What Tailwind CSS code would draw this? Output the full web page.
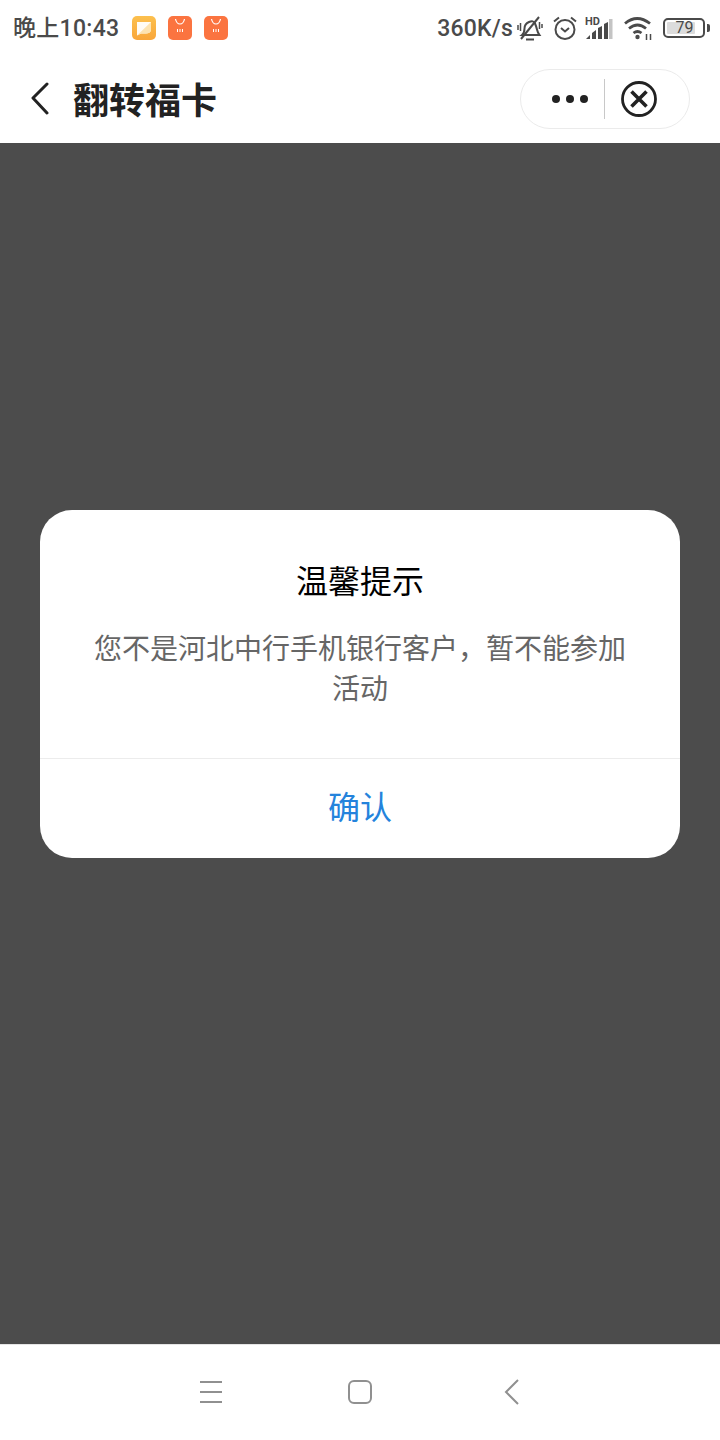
<!DOCTYPE html>
<html lang="zh-CN">
<head>
  <meta charset="UTF-8">
  <title>翻转福卡</title>
  <meta name="viewport" content="width=device-width, initial-scale=1.0">
  <script src="https://cdn.jsdelivr.net/npm/@tailwindcss/browser@4"></script>
</head>
<body class="bg-white font-['Noto_Sans','Noto_Sans_CJK_SC',sans-serif]">
  <div class="w-[720px] h-[1440px] flex flex-col overflow-hidden">

    <!-- status bar -->
    <div class="h-[56px] shrink-0 flex items-center justify-between pl-[13px] pr-[10px] text-[#4a4a4a] font-['Roboto','Noto_Sans_CJK_SC',sans-serif]">
      <div class="flex items-center">
        <span class="text-[23px] font-medium leading-none tracking-[0.3px] w-[119px]">晚上10:43</span>
        <div class="flex gap-[12px]">
          <svg class="w-[24px] h-[24px]" viewBox="0 0 24 24">
            <defs>
              <linearGradient id="msg" x1="0" y1="0" x2="0" y2="1"><stop offset="0" stop-color="#fcc04e"/><stop offset="1" stop-color="#f9a63a"/></linearGradient>
            </defs>
            <rect width="24" height="24" rx="5" fill="url(#msg)"/>
            <path d="M5 6h14v8.500q-1 3-5 3H9l-4 2z" fill="#fff" opacity="0.95"/>
            <path d="M5 19.500L19 6v8.500q-1 3-5 3H9z" fill="#fde3b0"/>
          </svg>
          <svg class="w-[24px] h-[24px]" viewBox="0 0 24 24">
            <rect width="24" height="24" rx="5" fill="#fb7440"/>
            <path d="M7.500 3q1 5 4.500 5t4.500-5" fill="none" stroke="#fff" stroke-width="1.200"/>
            <path d="M9.500 13v3M12 13v3M14.500 13v3" stroke="#fff" stroke-width="1"/>
          </svg>
          <svg class="w-[24px] h-[24px]" viewBox="0 0 24 24">
            <rect width="24" height="24" rx="5" fill="#fb7440"/>
            <path d="M7.500 3q1 5 4.500 5t4.500-5" fill="none" stroke="#fff" stroke-width="1.200"/>
            <path d="M9.500 13v3M12 13v3M14.500 13v3" stroke="#fff" stroke-width="1"/>
          </svg>
        </div>
      </div>
      <div class="flex items-center">
        <span class="text-[23px] font-medium leading-none tracking-[0.2px] mr-[4px]">360K/s</span>
        <!-- muted bell -->
        <svg class="w-[26px] h-[26px] mr-[9px]" viewBox="0 0 26 26" fill="none" stroke="#4a4a4a" stroke-width="2">
          <path d="M5 20q2.500-2 2.500-6.500t4.500-6.500 6 1.500 2 6 2.500 5.500z"/>
          <path d="M9 24.500h8"/>
          <path d="M4 24 22 2"/>
          <path d="M1 10v5M3.500 8v8M22.500 7v7M25 9v4" stroke-width="1.500"/>
        </svg>
        <!-- alarm -->
        <svg class="w-[26px] h-[26px] mr-[7px]" viewBox="0 0 26 26" fill="none" stroke="#4a4a4a" stroke-width="2">
          <circle cx="13" cy="14.500" r="9.500"/>
          <path d="M9 13l4 3.500 4-3.500"/>
          <path d="M2 6.500l5-4M24 6.500l-5-4"/>
        </svg>
        <!-- signal -->
        <div class="relative w-[30px] h-[26px] mr-[9px]">
          <span class="absolute left-0 top-[1px] text-[11px] font-bold leading-none">HD</span>
          <svg class="absolute inset-0 w-[30px] h-[26px]" viewBox="0 0 30 26">
            <path d="M1 24 5 20v4zM7 24v-6l4-3v9zM13 24V13l4-2v13zM19 24V9l4-2v17z" fill="#4a4a4a"/>
            <rect x="24" y="4" width="3.500" height="20" fill="#c4c4c4"/>
          </svg>
        </div>
        <!-- wifi -->
        <svg class="w-[30px] h-[26px] mr-[9px]" viewBox="0 0 30 26" fill="none" stroke="#4a4a4a" stroke-width="2.800">
          <path d="M1 8.500q12-10 25 0"/>
          <path d="M5 13.500q8.500-7 17 0"/>
          <path d="M9.500 18q4-3 8 0"/>
          <circle cx="13.500" cy="22" r="2.200" fill="#4a4a4a" stroke="none"/>
          <path d="M22.500 19v6M26.500 19v6" stroke-width="1.500"/>
        </svg>
        <!-- battery -->
        <div class="flex items-center">
          <div class="w-[42px] h-[20px] rounded-[5px] border-2 border-[#4a4a4a] p-[2px] flex">
            <div class="w-[28px] bg-[#dcdcdc] rounded-[1px] flex items-center justify-center text-[16px] font-normal leading-none pl-[7px]">79</div>
          </div>
          <div class="w-[3px] h-[8px] bg-[#4a4a4a] ml-[2px] rounded-r-[2px]"></div>
        </div>
      </div>
    </div>

    <!-- nav bar -->
    <div class="h-[87px] shrink-0 flex items-start justify-between pl-[30px] pr-[30px] pt-[13px]">
      <div class="flex items-center h-[60px]">
        <svg class="w-[20px] h-[34px]" viewBox="0 0 20 34" fill="none" stroke="#222" stroke-width="3" stroke-linecap="round" stroke-linejoin="round">
          <path d="M17 2 3 16l14 15"/>
        </svg>
        <h1 class="ml-[23px] pt-[3px] text-[36px] font-bold text-[#222] leading-none">翻转福卡</h1>
      </div>
      <div class="w-[170px] h-[60px] rounded-full border border-[#ebebeb] flex items-center">
        <div class="w-[83px] flex items-center justify-end gap-[6px] pr-[16px]">
          <span class="w-[8px] h-[8px] rounded-full bg-[#222]"></span>
          <span class="w-[8px] h-[8px] rounded-full bg-[#222]"></span>
          <span class="w-[8px] h-[8px] rounded-full bg-[#222]"></span>
        </div>
        <div class="w-px h-[40px] bg-[#c8c8c8]"></div>
        <svg class="ml-[16px] w-[36px] h-[36px]" viewBox="0 0 36 36" fill="none" stroke="#222">
          <circle cx="18" cy="18" r="16.500" stroke-width="2.800"/>
          <path d="M10.500 10.500l15 15M25.500 10.500l-15 15" stroke-width="3.600"/>
        </svg>
      </div>
    </div>

    <!-- page overlay + dialog -->
    <div class="flex-1 bg-[#4c4c4c] px-[40px] pt-[367px]">
      <div class="bg-white rounded-[32px] h-[348px] flex flex-col">
        <div class="h-[248px] pt-[50px] px-[48px] text-center">
          <h2 class="text-[32px] leading-[42px] text-black">温馨提示</h2>
          <p class="mt-[26px] text-[28px] leading-[40px] text-[#666]">您不是河北中行手机银行客户，暂不能参加活动</p>
        </div>
        <div class="flex-1 border-t border-[#ececec] flex items-center justify-center text-[32px] text-[#2483dc] pb-[4px]">确认</div>
      </div>
    </div>

    <!-- android nav -->
    <div class="h-[96px] shrink-0 border-t border-[#e5e5e5] flex items-start">
      <svg class="mt-[35px] ml-[200px] w-[22px] h-[24px]" viewBox="0 0 22 24" stroke="#909090" stroke-width="2">
        <path d="M0 2h22M0 12h22M0 22h22"/>
      </svg>
      <svg class="mt-[35px] ml-[126px] w-[24px] h-[24px]" viewBox="0 0 24 24" fill="none" stroke="#909090" stroke-width="2">
        <rect x="1" y="1" width="22" height="22" rx="5"/>
      </svg>
      <svg class="mt-[34px] ml-[132px] w-[16px] h-[26px]" viewBox="0 0 16 26" fill="none" stroke="#909090" stroke-width="2">
        <path d="M14 1 2 13l12 12"/>
      </svg>
    </div>
  </div>
</body>
</html>
